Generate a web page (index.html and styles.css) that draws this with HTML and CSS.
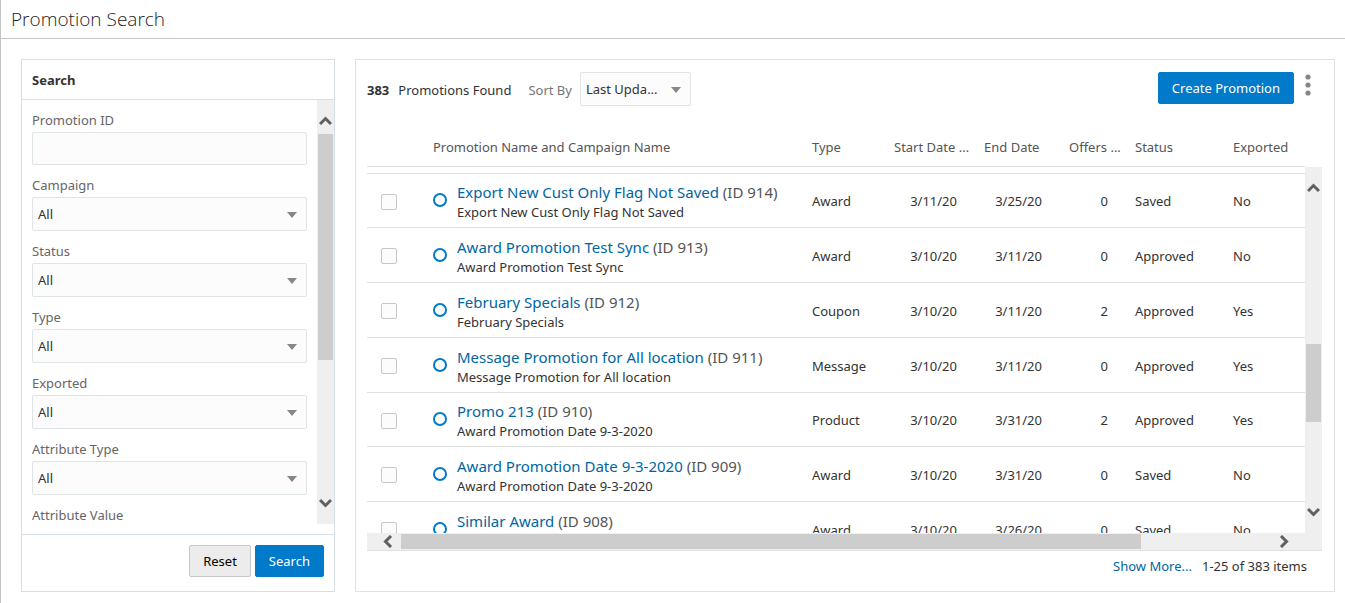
FILE: index.html
```html
<!DOCTYPE html>
<html lang="en">
<head>
    <meta charset="UTF-8">
    <meta name="viewport" content="width=device-width, initial-scale=1.0">
    <title>Promotion Search</title>
    <link rel="stylesheet" href="styles.css">
</head>
<body>

    <header class="page-header">
        <h1>Promotion Search</h1>
    </header>

    <main class="content">

        <!-- Search criteria -->
        <form class="panel search-panel">
            <h2>Search</h2>
            <div class="search-body">
                <div class="fields">
                    <div class="field">
                        <label for="promotionId">Promotion ID</label>
                        <input type="text" id="promotionId">
                    </div>
                    <div class="field">
                        <label for="campaign">Campaign</label>
                        <div class="select"><select id="campaign"><option>All</option></select></div>
                    </div>
                    <div class="field">
                        <label for="status">Status</label>
                        <div class="select"><select id="status"><option>All</option></select></div>
                    </div>
                    <div class="field">
                        <label for="type">Type</label>
                        <div class="select"><select id="type"><option>All</option></select></div>
                    </div>
                    <div class="field">
                        <label for="exported">Exported</label>
                        <div class="select"><select id="exported"><option>All</option></select></div>
                    </div>
                    <div class="field">
                        <label for="attributeType">Attribute Type</label>
                        <div class="select"><select id="attributeType"><option>All</option></select></div>
                    </div>
                    <div class="field">
                        <span>Attribute Value</span>
                    </div>
                </div>
                <div class="scrollbar vertical">
                    <svg class="arrow start" width="13" height="10" viewBox="0 0 13 10"><path d="M1 8 6.5 2.5 12 8"/></svg>
                    <div class="track"><div class="thumb" style="top: 0; height: 63.5%"></div></div>
                    <svg class="arrow end" width="13" height="10" viewBox="0 0 13 10"><path d="M1 2l5.5 5.5L12 2"/></svg>
                </div>
            </div>
            <div class="search-footer">
                <button type="reset" class="btn">Reset</button>
                <button type="button" class="btn primary">Search</button>
            </div>
        </form>

        <!-- Results -->
        <section class="panel results">
            <div class="toolbar">
                <strong>383</strong>
                <span class="found">Promotions Found</span>
                <label for="sortBy">Sort By</label>
                <div class="select sort"><select id="sortBy"><option>Last Upda...</option></select></div>
                <button type="button" class="btn primary create">Create Promotion</button>
                <button type="button" class="more" aria-label="More actions">
                    <svg width="6" height="22" viewBox="0 0 6 22"><circle cx="3" cy="3" r="2.6"/><circle cx="3" cy="11" r="2.6"/><circle cx="3" cy="19" r="2.6"/></svg>
                </button>
            </div>

            <div class="grid">
                <div class="table-view">
                    <table>
                        <colgroup>
                            <col class="col-check">
                            <col>
                            <col class="col-type">
                            <col class="col-start">
                            <col class="col-end">
                            <col class="col-offers">
                            <col class="col-status">
                            <col class="col-exported">
                        </colgroup>
                        <thead>
                            <tr>
                                <th></th>
                                <th>Promotion Name and Campaign Name</th>
                                <th>Type</th>
                                <th>Start Date ...</th>
                                <th>End Date</th>
                                <th>Offers ...</th>
                                <th>Status</th>
                                <th>Exported</th>
                            </tr>
                        </thead>
                        <tbody>
                            <tr class="spacer"><td colspan="8"></td></tr>
                            <tr>
                                <td class="check"><input type="checkbox" aria-label="Select 914"></td>
                                <td><div class="name"><i class="ring"></i><div><p class="promo"><a href="#">Export New Cust Only Flag Not Saved</a> (ID 914)</p><p>Export New Cust Only Flag Not Saved</p></div></div></td>
                                <td>Award</td>
                                <td class="num">3/11/20</td>
                                <td class="num">3/25/20</td>
                                <td class="num">0</td>
                                <td>Saved</td>
                                <td>No</td>
                            </tr>
                            <tr>
                                <td class="check"><input type="checkbox" aria-label="Select 913"></td>
                                <td><div class="name"><i class="ring"></i><div><p class="promo"><a href="#">Award Promotion Test Sync</a> (ID 913)</p><p>Award Promotion Test Sync</p></div></div></td>
                                <td>Award</td>
                                <td class="num">3/10/20</td>
                                <td class="num">3/11/20</td>
                                <td class="num">0</td>
                                <td>Approved</td>
                                <td>No</td>
                            </tr>
                            <tr>
                                <td class="check"><input type="checkbox" aria-label="Select 912"></td>
                                <td><div class="name"><i class="ring"></i><div><p class="promo"><a href="#">February Specials</a> (ID 912)</p><p>February Specials</p></div></div></td>
                                <td>Coupon</td>
                                <td class="num">3/10/20</td>
                                <td class="num">3/11/20</td>
                                <td class="num">2</td>
                                <td>Approved</td>
                                <td>Yes</td>
                            </tr>
                            <tr>
                                <td class="check"><input type="checkbox" aria-label="Select 911"></td>
                                <td><div class="name"><i class="ring"></i><div><p class="promo"><a href="#">Message Promotion for All location</a> (ID 911)</p><p>Message Promotion for All location</p></div></div></td>
                                <td>Message</td>
                                <td class="num">3/10/20</td>
                                <td class="num">3/11/20</td>
                                <td class="num">0</td>
                                <td>Approved</td>
                                <td>Yes</td>
                            </tr>
                            <tr>
                                <td class="check"><input type="checkbox" aria-label="Select 910"></td>
                                <td><div class="name"><i class="ring"></i><div><p class="promo"><a href="#">Promo 213</a> (ID 910)</p><p>Award Promotion Date 9-3-2020</p></div></div></td>
                                <td>Product</td>
                                <td class="num">3/10/20</td>
                                <td class="num">3/31/20</td>
                                <td class="num">2</td>
                                <td>Approved</td>
                                <td>Yes</td>
                            </tr>
                            <tr>
                                <td class="check"><input type="checkbox" aria-label="Select 909"></td>
                                <td><div class="name"><i class="ring"></i><div><p class="promo"><a href="#">Award Promotion Date 9-3-2020</a> (ID 909)</p><p>Award Promotion Date 9-3-2020</p></div></div></td>
                                <td>Award</td>
                                <td class="num">3/10/20</td>
                                <td class="num">3/31/20</td>
                                <td class="num">0</td>
                                <td>Saved</td>
                                <td>No</td>
                            </tr>
                            <tr>
                                <td class="check"><input type="checkbox" aria-label="Select 908"></td>
                                <td><div class="name"><i class="ring"></i><div><p class="promo"><a href="#">Similar Award</a> (ID 908)</p></div></div></td>
                                <td>Award</td>
                                <td class="num">3/10/20</td>
                                <td class="num">3/26/20</td>
                                <td class="num">0</td>
                                <td>Saved</td>
                                <td>No</td>
                            </tr>
                        </tbody>
                    </table>
                </div>
                <div class="scrollbar vertical">
                    <svg class="arrow start" width="13" height="10" viewBox="0 0 13 10"><path d="M1 8 6.5 2.5 12 8"/></svg>
                    <div class="track"><div class="thumb" style="top: 48%; height: 26%"></div></div>
                    <svg class="arrow end" width="13" height="10" viewBox="0 0 13 10"><path d="M1 2l5.5 5.5L12 2"/></svg>
                </div>
                <div class="scrollbar horizontal">
                    <svg class="arrow start" width="10" height="13" viewBox="0 0 10 13"><path d="M8 1 2.5 6.5 8 12"/></svg>
                    <div class="track"><div class="thumb" style="left: 0; width: 85%"></div></div>
                    <svg class="arrow end" width="10" height="13" viewBox="0 0 10 13"><path d="M2 1l5.5 5.5L2 12"/></svg>
                </div>
                <div class="corner"></div>
            </div>

            <div class="results-footer">
                <a href="#">Show More...</a>
                <span>1-25 of 383 items</span>
            </div>
        </section>

    </main>

</body>
</html>
```
FILE: styles.css
```css
* {
    box-sizing: border-box;
}

body {
    display: flex;
    flex-direction: column;
    height: 100vh;
    margin: 0;
    border-left: 1px solid #c4c4c4;
    background: #fff;
    color: #333;
    font-family: "Noto Sans", "Open Sans", sans-serif;
    font-size: 13px;
    line-height: 20px;
}

h1, h2, p {
    margin: 0;
}

a {
    color: #0066a1;
    text-decoration: none;
}

.page-header {
    padding: 4px 10px;
    border-bottom: 1px solid #c4c4c4;
}

.page-header h1 {
    color: #222;
    font-family: "Open Sans", sans-serif;
    font-size: 19px;
    font-weight: 300;
    line-height: 30px;
}

.content {
    display: flex;
    flex: 1;
    gap: 20px;
    min-height: 0;
    padding: 20px 10px 11px 20px;
}

.panel {
    display: flex;
    flex-direction: column;
    border: 1px solid #dfe1e3;
}

/* Search panel */
.search-panel {
    flex: 0 0 314px;
    border-color: #d6dfe6;
}

.search-panel h2 {
    padding: 10px 10px 9px;
    border-bottom: 1px solid #d6dfe6;
    font-size: 13px;
    font-weight: 700;
}

.search-body {
    display: flex;
    flex: 1;
    min-height: 0;
    padding-bottom: 10px;
}

.fields {
    flex: 1;
    padding: 10px 10px 0;
    overflow: hidden;
}

.field {
    display: flex;
    flex-direction: column;
    gap: 2px;
    margin-bottom: 10px;
    color: #666;
}

.field input {
    width: 100%;
    height: 33px;
    border: 1px solid #dfe4e7;
    border-radius: 2px;
    background: #fcfcfc;
    font: inherit;
}

.select {
    position: relative;
}

.select select {
    width: 100%;
    height: 34px;
    padding: 0 5px;
    border: 1px solid #dfe4e7;
    border-radius: 2px;
    background: #fcfcfc;
    color: #333;
    font: inherit;
    appearance: none;
}

.select::after {
    content: "";
    position: absolute;
    top: 15px;
    right: 10px;
    border: 5px solid transparent;
    border-top: 6px solid #878787;
    border-bottom: 0;
    pointer-events: none;
}

.search-footer {
    display: flex;
    justify-content: flex-end;
    gap: 4px;
    padding: 10px 10px 14px;
    border-top: 1px solid #d6dfe6;
}

.btn {
    height: 32px;
    padding: 0 13px;
    border: 1px solid #c4c8cb;
    border-radius: 2px;
    background: #ececec;
    color: #000;
    font: inherit;
}

.btn.primary {
    border-color: #007ac9;
    background: #007ac9;
    color: #fff;
}

/* Scrollbars */
.scrollbar {
    display: flex;
    background: #efefef;
}

.scrollbar.vertical {
    flex-direction: column;
    width: 17px;
    padding: 16px 0;
    align-items: center;
}

.scrollbar.horizontal {
    height: 17px;
    padding: 0 16px;
    align-items: center;
}

.arrow {
    flex: none;
    fill: none;
    stroke: #606060;
    stroke-width: 3;
}

.vertical .start {
    margin-bottom: 8px;
}

.vertical .end {
    margin-top: 8px;
}

.horizontal .start {
    margin-right: 8px;
}

.horizontal .end {
    margin-left: 8px;
}

.track {
    position: relative;
    flex: 1;
}

.vertical .track {
    width: 15px;
}

.horizontal .track {
    height: 15px;
}

.thumb {
    position: absolute;
    width: 100%;
    height: 100%;
    background: #cdcdcd;
}

/* Results */
.results {
    flex: 1;
    min-width: 0;
    padding: 12px 12px 0 11px;
}

.toolbar {
    display: flex;
    align-items: flex-start;
    margin-bottom: 22px;
}

.toolbar strong,
.toolbar label,
.found {
    padding: 8px 0 6px;
}

.toolbar strong {
    margin-right: 9px;
}

.toolbar label {
    margin: 0 8px 0 17px;
    color: #757575;
}

.sort {
    width: 111px;
}

.create {
    margin-left: auto;
}

.more {
    margin: 2px 11px 0 11px;
    padding: 0;
    border: 0;
    background: none;
    line-height: 0;
}

.more svg {
    fill: #878787;
}

.grid {
    display: grid;
    flex: 1;
    grid-template-columns: 1fr 17px;
    grid-template-rows: 1fr 18px;
    min-height: 0;
}

.grid .vertical {
    margin-top: 39px;
}

.grid .horizontal,
.corner {
    height: 18px;
    border-bottom: 1px solid #dfe1e3;
    background: #efefef;
}

.table-view {
    min-height: 0;
    overflow: hidden;
}

table {
    width: 100%;
    border-collapse: separate;
    border-spacing: 0;
    table-layout: fixed;
}

.col-check { width: 66px; }
.col-type { width: 82px; }
.col-start { width: 90px; }
.col-end { width: 85px; }
.col-offers { width: 66px; }
.col-status { width: 98px; }
.col-exported { width: 72px; }

th {
    height: 39px;
    padding: 0;
    border-bottom: 1px solid #dfe1e3;
    color: #555;
    font-weight: 400;
    text-align: left;
    white-space: nowrap;
}

td {
    height: 55px;
    padding: 1px 0 0;
    border-bottom: 1px solid #dfe1e3;
}

tr:nth-child(4n+2) td {
    height: 54px;
}

.spacer td {
    height: 7px;
}

.num {
    padding-right: 27px;
    text-align: right;
}

.check {
    padding-top: 2px;
    padding-left: 14px;
}

.check input {
    display: block;
    width: 16px;
    height: 16px;
    margin: 0;
    border: 1px solid #c4c8cb;
    border-radius: 2px;
    background: #fcfcfc;
    appearance: none;
}

.name {
    display: flex;
    gap: 10px;
    height: 44px;
    padding-top: 3px;
    white-space: nowrap;
}

.ring {
    width: 14px;
    height: 14px;
    margin-top: 11px;
    border: 2px solid #007ac9;
    border-radius: 50%;
}

.promo {
    color: #555;
    font-size: 15px;
}

.results-footer {
    display: flex;
    justify-content: flex-end;
    gap: 10px;
    padding: 5px 15px 15px 0;
}
```
